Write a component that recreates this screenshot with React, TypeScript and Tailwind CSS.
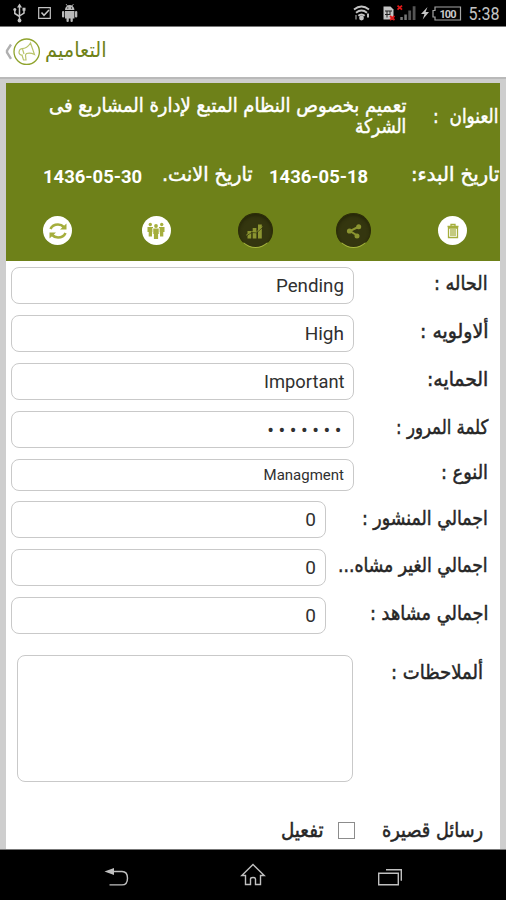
import { useLayoutEffect, useRef, useState } from "react";
import type { ReactNode } from "react";

// One line of right-to-left text, condensed or widened to fill a column of a given width.
function FitText({ className, children }: { className: string; children: ReactNode }) {
  const box = useRef<HTMLDivElement>(null);
  const text = useRef<HTMLSpanElement>(null);
  const [scale, setScale] = useState(1);
  useLayoutEffect(() => {
    if (box.current && text.current) {
      setScale(box.current.clientWidth / text.current.offsetWidth);
    }
  }, []);
  return (
    <div ref={box} className={`shrink-0 whitespace-nowrap ${className}`}>
      <span ref={text} className="inline-block origin-right" style={{ transform: `scaleX(${scale})` }}>
        {children}
      </span>
    </div>
  );
}

function StatusBar() {
  return (
    <div dir="ltr" className="h-[26px] shrink-0 bg-black">
      <svg width="506" height="26" viewBox="0 0 506 26" fill="none" stroke="#c4c4c4">
        <g strokeWidth="1.5">
          <path d="M19.500 6v15M14.800 10v3.500l4.700 3M24 9v4l-4.500 3" />
          <path d="M17 7.500l2.500-4 2.500 4z" fill="#c4c4c4" stroke="none" />
          <circle cx="19.500" cy="20.500" r="1.900" fill="#c4c4c4" stroke="none" />
          <circle cx="14.800" cy="9.500" r="1.500" fill="#c4c4c4" stroke="none" />
          <path d="M22.500 7.700h3v3h-3z" fill="#c4c4c4" stroke="none" />
        </g>
        <path d="M38.700 7.700h11.600v10.600H38.700z" strokeWidth="1.200" />
        <path d="M41.500 12.500l2.500 2.800 5-5.300" strokeWidth="1.500" />
        <g fill="#b9b9b9" stroke="none">
          <path d="M65 10a4.700 5 0 0 1 9.400 0zM65 11h9.400v7.500H65z" />
          <rect x="62" y="11" width="2.300" height="6.500" rx="1.100" />
          <rect x="75" y="11" width="2.300" height="6.500" rx="1.100" />
          <rect x="66.500" y="17" width="2.300" height="5" rx="1.100" />
          <rect x="70.500" y="17" width="2.300" height="5" rx="1.100" />
          <path d="M66 4l1.500 2M73.500 4L72 6" stroke="#b9b9b9" strokeWidth=".8" />
          <path d="M67.300 7.400h1v1h-1zM71 7.400h1v1h-1z" fill="#000" />
        </g>
        <g strokeWidth="1.900">
          <path d="M354 9.500q7.500-6 15 0M356 12.800q5.500-4.500 11 0M358.300 15.800q3.200-2.700 6.400 0" />
          <circle cx="361.500" cy="18" r="2.400" fill="#c4c4c4" stroke="none" />
          <path d="M356 15v4.500" stroke="#666" />
          <path d="M368 13.500v4" />
        </g>
        <path d="M383.500 6.500h7l3 3v10h-10z" fill="#c4c4c4" stroke="none" />
        <path d="M385 11h7M385 14.500h5M387 11v6.500M390 11v4" stroke="#222" strokeWidth="1" />
        <path d="M390 16l4.500 4M394.500 16l-4.500 4M397.500 5.700l4.500 4M402 5.700l-4.500 4" stroke="#e01818" strokeWidth="1.800" />
        <path d="M400.300 17h2.500v3h-2.500zM404.300 14.500h2.500V20h-2.500z" fill="#777" stroke="none" />
        <path d="M408.300 10.500h2.800V20h-2.800zM412.700 6.200h2.800V20h-2.800z" fill="#555" stroke="none" />
        <path d="M427.500 7l-6.500 7h3.500l-1.800 5.500 6.300-7.500h-3.400z" fill="#c4c4c4" stroke="none" />
        <path d="M435 7h25.500v13H435v-3h-2v-6.500h2z" stroke="#a5a5a5" strokeWidth="1.200" />
        <text x="448" y="17.800" textAnchor="middle" textLength="17" fill="#c8c8c8" stroke="none" className="font-['Roboto'] text-[11px] font-bold">100</text>
        <text x="468.500" y="19.700" textLength="31" lengthAdjust="spacingAndGlyphs" fill="#c4c4c4" stroke="none" className="font-['Roboto'] text-[17.5px]">5:38</text>
      </svg>
    </div>
  );
}

function TitleBar() {
  return (
    <header dir="ltr" className="flex h-[53px] shrink-0 items-start border-t border-[#777] border-b-2 border-b-[#b9b9b9] bg-white pl-1 pt-[11px]">
      <svg width="37" height="28" viewBox="0 0 37 28" fill="none">
        <path d="M7 6.500L3 12.500v2L7 20.800" stroke="#b0b0b0" strokeWidth="2.400" />
        <circle cx="22.700" cy="13.700" r="12.700" stroke="#8fa32c" strokeWidth="1.300" />
        <path d="M15 15q0-4 3-4.300 5 0 8.500-5.700L30.500 16.500q-4-2-8-1l-1 1.500.500 5h-2.500l-1.500-5q-2 .500-3-2zM18.500 11l1.500 5" stroke="#b9c46b" strokeWidth="1.200" />
      </svg>
      <div dir="rtl">
        <FitText className="ml-1 w-[62px] text-[21px] leading-6 text-[#6f8218]">التعاميم</FitText>
      </div>
    </header>
  );
}

function LightButton({ children }: { children: ReactNode }) {
  return (
    <button className="mx-[3px] mt-[3px] flex size-[29px] items-center justify-center rounded-full bg-white text-[#a5ae3c]">
      <svg width="20" height="20" viewBox="0 0 20 20" fill="none" stroke="currentColor">{children}</svg>
    </button>
  );
}

function DarkButton({ children }: { children: ReactNode }) {
  return (
    <button className="flex size-[35px] items-center justify-center rounded-full border border-[#2c2d08] border-b-[#a9b83e] bg-[#34360f] text-[#8b9430] shadow-[inset_0_2px_3px_#17180480]">
      <svg width="20" height="20" viewBox="0 0 20 20" fill="none" stroke="currentColor">{children}</svg>
    </button>
  );
}

function Summary() {
  return (
    <section className="h-[178px] shrink-0 bg-[#6e8119] text-white [-webkit-text-stroke:0.5px_white]">
      <div className="flex h-[77px] pr-[2px] pt-3">
        <FitText className="mt-[9px] w-[65px] text-[20px] leading-6">العنوان&nbsp; :</FitText>
        <div className="mr-[27px]">
          <FitText className="w-[357px] text-[19.5px] leading-[21px]">تعميم بخصوص النظام المتبع لإدارة المشاريع فى</FitText>
          <FitText className="w-[51px] text-[19.5px] leading-[21px]">الشركة</FitText>
        </div>
      </div>
      <div className="flex h-[53px] pr-px">
        <FitText className="w-[88px] text-[20px] leading-7">تاريخ البدء:</FitText>
        <FitText className="mr-[43px] mt-[5px] w-[99px] font-['Roboto'] text-[19px] font-bold leading-6 [-webkit-text-stroke:0]">1436-05-18</FitText>
        <FitText className="mr-[16px] w-[91px] text-[20px] leading-7">تاريخ الانت.</FitText>
        <FitText className="mr-[20px] mt-[5px] w-[99px] font-['Roboto'] text-[19px] font-bold leading-6 [-webkit-text-stroke:0]">1436-05-30</FitText>
      </div>
      <div className="flex justify-between pl-[34px] pr-[30px]">
        <LightButton>
          <path d="M4.500 5.500h11M8 5V3.500h4V5M5.500 7v9.500h9V7zM8 8v7M10 8v7M12 8v7" strokeWidth="1.300" />
        </LightButton>
        <DarkButton>
          <path d="M15 5.500L6 10l8 5" strokeWidth="2" />
          <g fill="currentColor" stroke="none"><circle cx="14.700" cy="5.700" r="2.500" /><circle cx="5.500" cy="10" r="2.600" /><circle cx="13" cy="15" r="2.500" /></g>
        </DarkButton>
        <DarkButton>
          <g fill="currentColor" stroke="none"><path d="M2.500 10h3.700v7.500H2.500zM7.700 7h3.700v10.500H7.700zM13 3.500h3.800v14H13z" /></g>
          <path d="M1 15.200l5.500-3.700 5 .300 6-5.300" strokeWidth=".8" stroke="#34360f" />
          <path d="M1 14.300l5.500-3.700 5 .300 6-5.300" strokeWidth=".8" />
        </DarkButton>
        <LightButton>
          <g fill="currentColor" stroke="none">
            <circle cx="4.300" cy="3.500" r="1.700" /><circle cx="15.700" cy="3.500" r="1.700" /><circle cx="10" cy="5" r="1.900" />
            <path d="M1.500 6h5.500v5H6v4.500H2.700V11H1.500zM13 6h5.500v5h-1.200v4.500H14V11h-1zM6.700 7.500h6.600v5.500h-1.200v5H7.900v-5H6.700z" />
          </g>
          <path d="M6.800 7v6.500M13.200 7v6.500" stroke="white" strokeWidth=".9" />
        </LightButton>
        <LightButton>
          <path d="M2.500 8q2-4.500 7.500-4.500 3.500 0 5.800 2.500M17.500 12q-2 4.500-7.500 4.500-3.500 0-5.800-2.500" strokeWidth="2.600" />
          <path d="M18.500 2.500v6H12zM1.500 17.500v-6H8z" fill="currentColor" stroke="none" />
        </LightButton>
      </div>
    </section>
  );
}

type RowProps = { label: string; labelClass: string; value: string; boxClass: string; rowClass: string; fitClass: string };

function Row({ label, labelClass, value, boxClass, rowClass, fitClass }: RowProps) {
  return (
    <div className={`flex shrink-0 justify-between pl-[5px] pr-[12px] ${rowClass}`}>
      <FitText className={`text-[20px] leading-8 [-webkit-text-stroke:0.5px_#262626] ${labelClass}`}>{label}</FitText>
      <div className={`flex items-center rounded-lg border-[1.500px] border-[#c9c9c9] bg-white pr-[9px] pt-px font-['Roboto'] text-[#303030] ${boxClass}`}>
        <FitText className={fitClass}>{value}</FitText>
      </div>
    </div>
  );
}

const rows: RowProps[] = [
  { label: "الحاله :", labelClass: "w-[54px]", value: "Pending", boxClass: "h-[37px] w-[343px]", rowClass: "h-12", fitClass: "w-[68px] text-[19px]" },
  { label: "ألاولويه :", labelClass: "w-[68px]", value: "High", boxClass: "h-[37px] w-[343px]", rowClass: "h-12", fitClass: "w-[39px] text-[19px]" },
  { label: "الحمايه:", labelClass: "w-[61px]", value: "Important", boxClass: "h-[37px] w-[343px]", rowClass: "h-12", fitClass: "w-[81px] text-[19px]" },
  { label: "كلمة المرور :", labelClass: "w-[92px]", value: "•••••••", boxClass: "h-[37px] w-[343px]", rowClass: "h-12", fitClass: "w-[79px] -mr-[2px] text-[20px] tracking-[4.500px]" },
  { label: "النوع :", labelClass: "w-[47px] -mt-[3px]", value: "Managment", boxClass: "h-[32px] w-[343px]", rowClass: "h-[42px]", fitClass: "w-[80px] text-[15px]" },
  { label: "اجمالي المنشور :", labelClass: "w-[126px] mt-px", value: "0", boxClass: "h-[37px] w-[315px]", rowClass: "h-12", fitClass: "w-[11px] text-[19px]" },
  { label: "اجمالي الغير مشاه...", labelClass: "w-[150px]", value: "0", boxClass: "h-[37px] w-[315px]", rowClass: "h-12", fitClass: "w-[11px] text-[19px]" },
  { label: "اجمالي مشاهد :", labelClass: "w-[119px]", value: "0", boxClass: "h-[37px] w-[315px]", rowClass: "h-12", fitClass: "w-[11px] text-[19px]" },
];

function NavBar() {
  return (
    <nav dir="ltr" className="h-[51px] shrink-0 border-t border-[#777] bg-black">
      <svg width="506" height="50" viewBox="0 850 506 50" fill="none" stroke="#c0c0c0" strokeWidth="1.400">
        <path d="M113 871.500h9q5.500 0 5.500 6.700t-5.500 6.700h-12.500" />
        <path d="M104.500 871.500l9.500-3.500v7z" fill="#c0c0c0" stroke="none" />
        <path d="M253 864.500l11.200 11h-3.700v9h-5v-5.500q0-1.500-2.500-1.500t-2.500 1.500v5.500h-5v-9h-3.700z" />
        <path d="M378.700 873.200h19.600v11.600h-19.600zM386 869.700h15.300v11" />
      </svg>
    </nav>
  );
}

export default function App() {
  return (
    <div dir="rtl" className="flex h-[900px] w-[506px] flex-col overflow-hidden bg-[#cecece] font-['DejaVu_Sans',sans-serif] text-[#262626]">
      <StatusBar />
      <TitleBar />
      <main className="mx-[6px] mt-1 flex min-h-0 flex-1 flex-col overflow-hidden bg-white">
        <Summary />
        <div className="flex flex-col pt-[6px]">
          {rows.map((row) => (
            <Row key={row.label} {...row} />
          ))}
        </div>
        <div className="flex h-[167px] shrink-0 justify-between pl-[11px] pr-[17px] pt-[10px]">
          <FitText className="mt-px w-[92px] text-[20px] leading-8 [-webkit-text-stroke:0.5px_#262626]">ألملاحظات :</FitText>
          <textarea className="h-[127px] w-[336px] resize-none rounded-lg border-[1.500px] border-[#c9c9c9] bg-white" />
        </div>
        <div className="flex shrink-0 items-start pr-[17px] [-webkit-text-stroke:0.5px_#262626]">
          <FitText className="mt-0.5 w-[101px] text-[20px] leading-8">رسائل قصيرة</FitText>
          <div className="mr-[27px] mt-[10px] size-[17px] border border-[#8c8c8c] bg-white" />
          <FitText className="mr-[14px] mt-0.5 w-[43px] text-[20px] leading-8">تفعيل</FitText>
        </div>
      </main>
      <NavBar />
    </div>
  );
}
